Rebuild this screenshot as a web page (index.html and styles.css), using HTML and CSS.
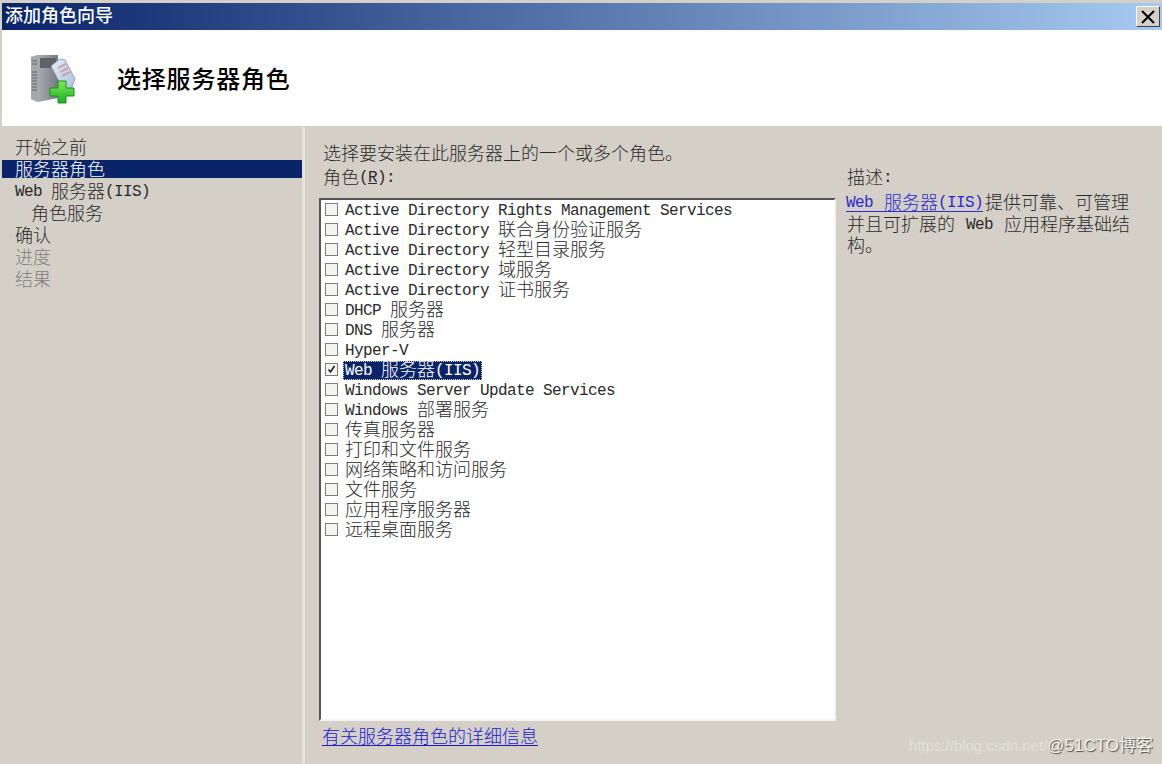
FILE: index.html
```html
<!DOCTYPE html>
<html lang="zh-CN">
<head>
    <meta charset="UTF-8">
    <title>添加角色向导</title>
    <link rel="stylesheet" href="styles.css">
</head>
<body>
    <div class="wizard">
        <div class="titlebar">
            <span class="titlebar-text">添加角色向导</span>
            <div class="close-btn">
                <svg width="16" height="14" viewBox="0 0 16 14"><path d="M2 1 L14 13 M14 1 L2 13" stroke="#000" stroke-width="2" fill="none"/></svg>
            </div>
        </div>

        <div class="header">
            <svg class="header-icon" width="50" height="52" viewBox="0 0 50 52">
                <defs>
                    <linearGradient id="front" x1="0" y1="0" x2="1" y2="0">
                        <stop offset="0" stop-color="#b9bcbf"/>
                        <stop offset="1" stop-color="#777b80"/>
                    </linearGradient>
                    <linearGradient id="tag" x1="0" y1="0" x2="1" y2="1">
                        <stop offset="0" stop-color="#e6eef8"/>
                        <stop offset="1" stop-color="#a9c0dc"/>
                    </linearGradient>
                    <linearGradient id="plus" x1="0" y1="0" x2="0" y2="1">
                        <stop offset="0" stop-color="#86e855"/>
                        <stop offset="1" stop-color="#19b024"/>
                    </linearGradient>
                </defs>
                <path d="M3 5 L10 3 L30 3 L30 46 L10 50 L3 47 Z" fill="url(#front)"/>
                <path d="M10 3 L10 50 L3 47 L3 5 Z" fill="#a4a7ab"/>
                <path d="M4 9 H9 M4 12 H9 M4 20 H9 M4 23 H9 M4 26 H9 M4 29 H9 M4 32 H9 M4 35 H9 M4 38 H9" stroke="#63666a" stroke-width="1"/>
                <path d="M12 6 H28 V16 H12 Z" fill="#5e6266"/>
                <path d="M23 14 L32 7 L37 8 L47 27 L44 35 L36 39 Z" fill="url(#tag)" stroke="#8fa6c2" stroke-width="1"/>
                <path d="M30 16 L38 12 M32 20 L40 16 M34 24 L42 20" stroke="#c9a3ad" stroke-width="2"/>
                <path d="M30 29 H38 V36 H46 V44 H38 V51 H30 V44 H22 V36 H30 Z" fill="url(#plus)" stroke="#1b8f23" stroke-width="1"/>
            </svg>
            <h1 class="header-title">选择服务器角色</h1>
        </div>

        <div class="content">
            <div class="sidebar">
                <div class="step"><span class="zh">开始之前</span></div>
                <div class="step step-active"><span class="zh">服务器角色</span></div>
                <div class="step">Web <span class="zh">服务器</span>(IIS)</div>
                <div class="step step-sub"><span class="zh">角色服务</span></div>
                <div class="step"><span class="zh">确认</span></div>
                <div class="step step-disabled"><span class="zh">进度</span></div>
                <div class="step step-disabled"><span class="zh">结果</span></div>
            </div>

            <div class="main">
                <div class="intro"><span class="zh">选择要安装在此服务器上的一个或多个角色。</span></div>
                <div class="columns">
                    <div class="roles">
                        <div class="field-label"><span class="zh">角色</span>(<u>R</u>):</div>
                        <div class="role-list">
                            <div class="role"><span class="check"></span><span class="role-name">Active Directory Rights Management Services</span></div>
                            <div class="role"><span class="check"></span><span class="role-name">Active Directory <span class="zh">联合身份验证服务</span></span></div>
                            <div class="role"><span class="check"></span><span class="role-name">Active Directory <span class="zh">轻型目录服务</span></span></div>
                            <div class="role"><span class="check"></span><span class="role-name">Active Directory <span class="zh">域服务</span></span></div>
                            <div class="role"><span class="check"></span><span class="role-name">Active Directory <span class="zh">证书服务</span></span></div>
                            <div class="role"><span class="check"></span><span class="role-name">DHCP <span class="zh">服务器</span></span></div>
                            <div class="role"><span class="check"></span><span class="role-name">DNS <span class="zh">服务器</span></span></div>
                            <div class="role"><span class="check"></span><span class="role-name">Hyper-V</span></div>
                            <div class="role"><span class="check"><svg width="11" height="11" viewBox="0 0 11 11"><path d="M2.5 5.5 L4.5 8 L8.5 2" stroke="#222" stroke-width="1.6" fill="none"/></svg></span><span class="role-name role-selected">Web <span class="zh">服务器</span>(IIS)</span></div>
                            <div class="role"><span class="check"></span><span class="role-name">Windows Server Update Services</span></div>
                            <div class="role"><span class="check"></span><span class="role-name">Windows <span class="zh">部署服务</span></span></div>
                            <div class="role"><span class="check"></span><span class="role-name"><span class="zh">传真服务器</span></span></div>
                            <div class="role"><span class="check"></span><span class="role-name"><span class="zh">打印和文件服务</span></span></div>
                            <div class="role"><span class="check"></span><span class="role-name"><span class="zh">网络策略和访问服务</span></span></div>
                            <div class="role"><span class="check"></span><span class="role-name"><span class="zh">文件服务</span></span></div>
                            <div class="role"><span class="check"></span><span class="role-name"><span class="zh">应用程序服务器</span></span></div>
                            <div class="role"><span class="check"></span><span class="role-name"><span class="zh">远程桌面服务</span></span></div>
                        </div>
                        <a class="more-link" href="#"><span class="zh">有关服务器角色的详细信息</span></a>
                    </div>
                    <div class="description">
                        <div class="field-label"><span class="zh">描述</span>:</div>
                        <p class="description-text"><a href="#">Web <span class="zh">服务器</span>(IIS)</a><span class="zh">提供可靠、可管理并且可扩展的</span> Web <span class="zh">应用程序基础结构。</span></p>
                    </div>
                </div>
            </div>
        </div>

        <div class="watermark"><span class="watermark-csdn">https://blog.csdn.net/</span><span class="watermark-cto">@51CTO博客</span></div>
    </div>
</body>
</html>
```

FILE: styles.css
```css
* {
    box-sizing: border-box;
}
html, body {
    margin: 0;
    height: 100%;
    overflow: hidden;
}
body {
    background: #d4d0c8;
    color: #2a2a2a;
    font-family: "Liberation Mono", "Noto Sans CJK SC", monospace;
    font-size: 16px;
    letter-spacing: -0.6px;
}
/* line-height 0 keeps the CJK font from pushing the latin baseline down */
.zh {
    font-family: "Noto Sans CJK SC", sans-serif;
    font-size: 18px;
    font-weight: 300;
    line-height: 0;
    letter-spacing: 0;
    vertical-align: -2px;
}
.wizard {
    position: relative;
    height: 764px;
    padding: 3px 0 0 2px;
    display: flex;
    flex-direction: column;
}
.titlebar {
    height: 27px;
    display: flex;
    align-items: center;
    justify-content: space-between;
    padding: 0 2px 0 3px;
    background: linear-gradient(to right, #0a246a, #a6caf0);
}
.titlebar-text {
    color: white;
    font-family: "Noto Sans CJK SC", sans-serif;
    font-size: 18px;
    font-weight: 500;
    letter-spacing: 0;
    line-height: 24px;
    margin-bottom: 5px;
}
.close-btn {
    width: 24px;
    height: 21px;
    display: flex;
    align-items: center;
    justify-content: center;
    background: #d4d0c8;
    border: 1px solid;
    border-color: #fff #404040 #404040 #fff;
}
.header {
    height: 96px;
    display: flex;
    align-items: center;
    background: white;
}
.header-icon {
    margin-left: 26px;
    flex: none;
}
.header-title {
    margin: 0 0 2px 39px;
    color: #000;
    font-family: "Noto Sans CJK SC", sans-serif;
    font-size: 24px;
    font-weight: 500;
    letter-spacing: 0.8px;
}
.content {
    flex: 1;
    display: flex;
    gap: 3px;
    margin-top: 1px;
    background: #e4e2dc;
}
.sidebar {
    width: 300px;
    padding-top: 11px;
    background: #d4d0c8;
}
.step {
    height: 18px;
    line-height: 21px;
    margin-bottom: 4px;
    padding-left: 13px;
    white-space: nowrap;
}
.step-active {
    background: #0a246a;
    color: white;
}
.step-sub {
    padding-left: 29px;
}
.step-disabled {
    color: #808080;
}
.main {
    flex: 1;
    padding: 15px 0 0 14px;
    background: #d4d0c8;
}
.intro {
    height: 22px;
    line-height: 25px;
    padding-left: 4px;
}
.columns {
    display: flex;
    gap: 11px;
    margin-top: 2px;
}
.roles {
    width: 517px;
}
.field-label {
    height: 22px;
    line-height: 25px;
    padding-left: 4px;
}
.role-list {
    height: 523px;
    margin-top: 10px;
    background: white;
    border: 2px solid;
    border-color: #555 #f4f3ef #f4f3ef #555;
}
.role {
    height: 20px;
    display: flex;
    align-items: center;
    gap: 7px;
    padding-left: 4px;
    white-space: nowrap;
}
.role .zh {
    vertical-align: -1px;
}
.check {
    width: 13px;
    height: 13px;
    flex: none;
    display: flex;
    align-items: center;
    justify-content: center;
    margin-top: -1px;
    background: #f5f4f1;
    border: 1px solid #7d7d7d;
}
.role-name {
    height: 19px;
    line-height: 21px;
}
.role-selected {
    margin-left: -2px;
    padding: 0 2px;
    background: #0a246a;
    color: white;
    outline: 1px dotted #d4d0c8;
    outline-offset: -1px;
}
.more-link {
    display: inline-block;
    margin: 5px 0 0 3px;
    line-height: 22px;
    color: #1a1ad6;
    text-underline-offset: 4px;
}
.description {
    width: 290px;
    word-spacing: 2px;
}
.description .field-label {
    padding-left: 0;
}
.description-text {
    margin: 5px 0 0;
    line-height: 21.5px;
}
.description-text a {
    margin: 0 2px 0 -1px;
    color: #2a2ad0;
    text-underline-offset: 4px;
}
.watermark {
    position: absolute;
    right: 9px;
    bottom: 7px;
    display: flex;
    align-items: center;
    font-family: "Liberation Sans", "Noto Sans CJK SC", sans-serif;
    font-size: 15px;
    letter-spacing: 0;
    line-height: 22px;
}
.watermark-csdn {
    color: #e2e0da;
}
.watermark-cto {
    color: #f3f2ee;
    font-size: 17px;
    text-shadow: 1px 1px 1px #4a4a4a;
}
```
